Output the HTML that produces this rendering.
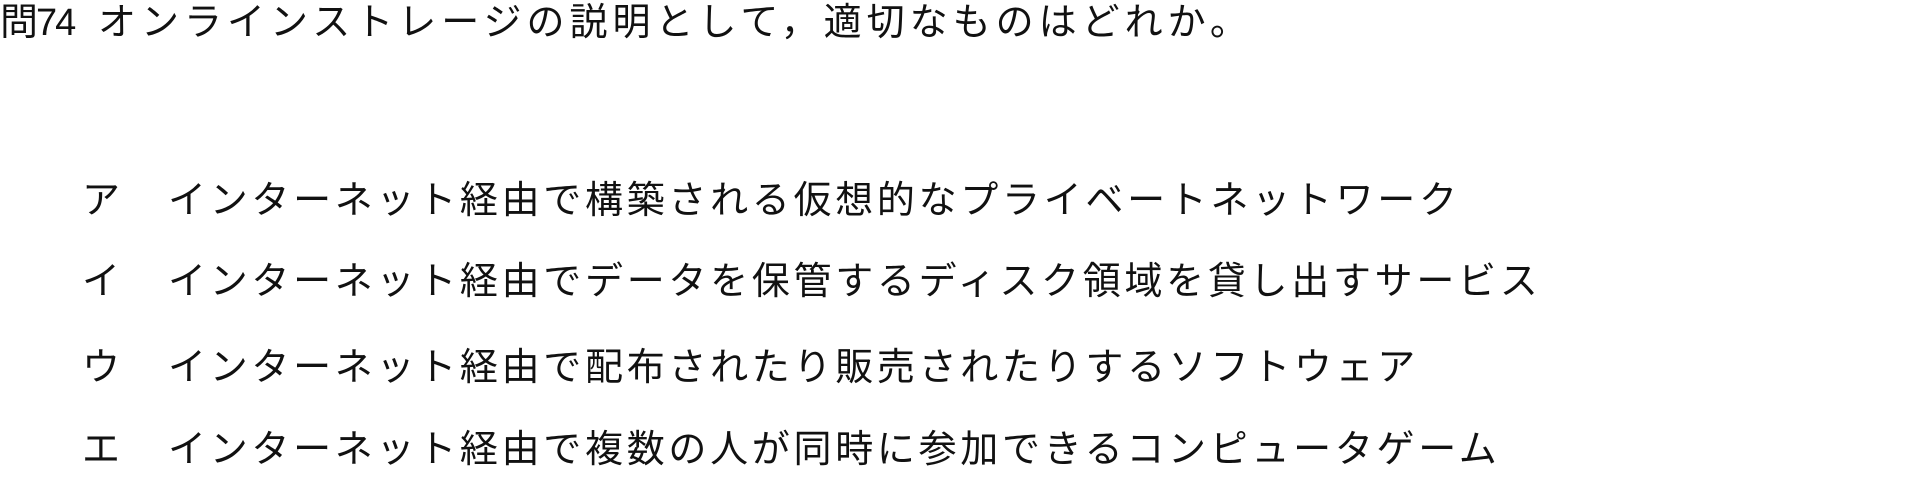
<!DOCTYPE html>
<html><head><meta charset="utf-8"><style>
html,body{margin:0;padding:0;background:#fff;width:1929px;height:495px;overflow:hidden}
body{font-family:"Liberation Sans","Noto Sans CJK JP",sans-serif;color:#111;position:relative}
.t{position:absolute;white-space:nowrap;font-size:38px;line-height:40px}
.o{letter-spacing:3.7px}
</style></head><body>
<div class="t" style="left:0;top:3px;letter-spacing:-2px">問74</div>
<div class="t" style="left:98px;top:3px;letter-spacing:5px">オンラインストレージの説明として，適切なものはどれか。</div>
<div class="t" style="left:82px;top:181px">ア</div>
<div class="t o" style="left:168px;top:181px">インターネット経由で構築される仮想的なプライベートネットワーク</div>
<div class="t" style="left:82px;top:262px">イ</div>
<div class="t o" style="left:168px;top:262px">インターネット経由でデータを保管するディスク領域を貸し出すサービス</div>
<div class="t" style="left:82px;top:348px">ウ</div>
<div class="t o" style="left:168px;top:348px">インターネット経由で配布されたり販売されたりするソフトウェア</div>
<div class="t" style="left:82px;top:430px">エ</div>
<div class="t o" style="left:168px;top:430px">インターネット経由で複数の人が同時に参加できるコンピュータゲーム</div>
</body></html>
